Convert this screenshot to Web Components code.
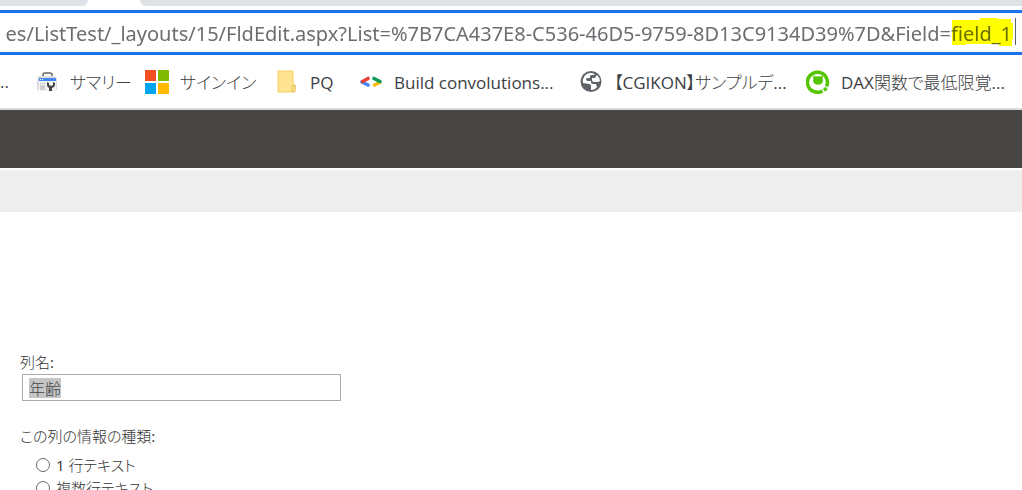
<!DOCTYPE html>
<html lang="ja">
<head>
<meta charset="utf-8">
<title>列の編集</title>
<style>
html,body{margin:0;height:100%;overflow:hidden;background:#fff}
body{font-family:"Open Sans","Noto Sans CJK JP Light","Noto Sans CJK JP",sans-serif;color:#333}
</style>
</head>
<body>
<edit-window></edit-window>

<template id="t-window">
<style>
:host{display:flex;flex-direction:column;height:100%;overflow:hidden}
.suite{flex:none;height:58px;background:#484644}
.ribbon{flex:none;height:42px;margin-top:2px;background:#eee}
main{flex:none;padding:139px 20px 0}
</style>
<tab-strip></tab-strip>
<address-bar value="es/ListTest/_layouts/15/FldEdit.aspx?List=%7B7CA437E8-C536-46D5-9759-8D13C9134D39%7D&amp;Field=field_1"></address-bar>
<bookmark-bar>
<bookmark-item icon="tools">サマリー</bookmark-item>
<bookmark-item icon="windows">サインイン</bookmark-item>
<bookmark-item icon="folder">PQ</bookmark-item>
<bookmark-item icon="code">Build convolutions...</bookmark-item>
<bookmark-item icon="globe">【CGIKON】サンプルデ...</bookmark-item>
<bookmark-item icon="qiita">DAX関数で最低限覚...</bookmark-item>
</bookmark-bar>
<div class="suite"></div>
<div class="ribbon"></div>
<main><column-form></column-form></main>
</template>

<template id="t-tabs">
<style>
:host{display:flex;flex:none;height:6px;gap:52px;background:#fff}
i{background:#dee1e6;width:88px;border-bottom-right-radius:6px}
i+i{width:auto;flex:1;border-radius:0 0 0 6px}
</style>
<i></i><i></i>
</template>

<template id="t-address">
<style>
:host{display:block;flex:none;position:relative;margin-top:4px;border:solid #1a73e8;border-width:3px 0;height:39px;background:#fff;isolation:isolate}
input{display:block;box-sizing:border-box;width:100%;height:39px;border:0;padding:2px 10px 0 0;outline:0;background:none;font:20px/37px "Noto Sans",sans-serif;color:#6b6e71;text-align:right}
svg{position:absolute;right:8px;top:4px;mix-blend-mode:multiply;pointer-events:none}
.caret{position:absolute;right:6px;top:5px;width:1px;height:27px;background:#5f6368}
</style>
<input type="text" aria-label="アドレス" spellcheck="false">
<svg width="62" height="30" viewBox="0 0 62 30"><path d="M0 3H28V1H46V2H59V6H61V22H60V29H47V27H14V28H0Z" fill="#ff0"/></svg>
<span class="caret"></span>
</template>

<template id="t-bookmarks">
<style>
:host{display:grid;flex:none;grid-template-columns:110px 130px 84px 220px 227px 1fr;align-items:center;position:relative;height:53px;padding-left:36px;border-bottom:2px solid #d9d9d9;color:#3c4043}
.more{position:absolute;left:0;top:0;font:17px/53px "Open Sans",sans-serif}
</style>
<span class="more">..</span><slot></slot>
</template>

<template id="t-bookmark">
<style>
:host{display:block;min-width:0}
a{display:flex;align-items:center;gap:11px;color:inherit;text-decoration:none;white-space:nowrap;font:17px/24px "Open Sans","Noto Sans CJK JP Light","Noto Sans CJK JP",sans-serif;font-feature-settings:"palt"}
svg{flex:none;width:24px;height:24px;margin-left:-1px}
span{padding-top:2px}
</style>
<a href="#"><svg viewBox="0 0 24 24" aria-hidden="true"></svg><span><slot></slot></span></a>
</template>

<template id="t-form">
<style>
:host{display:block;font:15px/22px "Open Sans","Noto Sans CJK JP Light","Noto Sans CJK JP",sans-serif;font-feature-settings:"palt"}
form{margin:0}
.name{display:block}
input[type=text]{display:block;box-sizing:border-box;width:319px;max-width:100%;height:27px;margin:1px 0 24px 2px;padding:0 6px;border:1px solid #ababab;outline:0;color:#444;font:16px/25px "Open Sans","Noto Sans CJK JP Light","Noto Sans CJK JP",sans-serif;background:linear-gradient(#c6c6c6,#c6c6c6) 6px 3px/32px 20px no-repeat #fff}
fieldset{border:0;margin:0;padding:0;min-width:0}
legend{padding:0;margin-bottom:6px}
.option{display:flex;align-items:center;gap:6px;height:23px;padding-left:16px}
.option input{appearance:none;box-sizing:border-box;flex:none;width:14px;height:14px;margin:0;border:1px solid #6b6b6b;border-radius:50%;background:#fff}
</style>
<form>
<label class="name" for="n">列名:</label>
<input id="n" type="text" value="年齢">
<fieldset><legend>この列の情報の種類:</legend>
<label class="option"><input type="radio" name="kind"><span>1 行テキスト</span></label>
<label class="option"><input type="radio" name="kind"><span>複数行テキスト</span></label>
</fieldset>
</form>
</template>

<script>
const ICONS={
tools:'<path d="M8 7V5q0-2 2-2h5q2 0 2 2v2" fill="none" stroke="#666" stroke-width="1.5"/><path d="M2 20V9q0-3 3-3h14q3 0 3 3v11z" fill="#ddd"/><path d="M4 10h17v11H4z" fill="#f4f4f4"/><path d="M4 8h17v3H4z" fill="#4285f4"/><path d="M5 9h1v1H5zM7 9h1v1H7z" fill="#fff"/><path d="M5 13h6v1H5zM5 15h5v5H5z" fill="#cfcfcf"/><path d="M12 12v3q0 2 2 3v3h3v-3q3-1 3-3v-2l-2-1v3l-2 1-2-1v-2z" fill="#444"/>',
windows:'<path d="M0 0h11v11H0z" fill="#f25022"/><path d="M13 0h11v11H13z" fill="#7fba00"/><path d="M0 13h11v11H0z" fill="#00a4ef"/><path d="M13 13h11v11H13z" fill="#ffb900"/>',
folder:'<path d="M3 1h15v14h2v5q0 2-2 2H3z" fill="#ffe391" stroke="#f4cf62"/><path d="M17 21v-4q0-2 2-2t1 2v3q0 2-1 2t-2-1" fill="#ffe391" stroke="#dfb94b"/>',
code:'<g fill="none" stroke-width="3.6" stroke-linecap="round"><path d="M3 12l6 3" stroke="#4285f4"/><path d="M3.500 11.500L9 8.500" stroke="#ea4335"/><path d="M20.500 12.500l-5 2.500" stroke="#fbbc04"/><path d="M15 8.500l6 3" stroke="#0f9d58"/></g>',
globe:'<circle cx="12" cy="11.500" r="10.500" fill="#5f6368"/><path d="M12 3q-5 0-7 4-2 3-1 6l6 1q2 0 2 2v4q4 0 6-3l-1-3h-3q-2 0-2-2v-1H9q-2 0-2-2 0-1 2-1h2V6q0-1 2-1h3q-1-2-4-2zM17 6q0 2-2 2h-2v2q0 2 2 2h3q2 0 3-1 0-3-3-6z" fill="#fff"/>',
qiita:'<path d="M20.500 16.500A10 10 0 1 0 16.500 20.900" fill="none" stroke="#55c500" stroke-width="3.500"/><path d="M18 18l2.500 2.500" stroke="#55c500" stroke-width="3.500"/><ellipse cx="12" cy="10.500" rx="5" ry="4.300" fill="#55c500"/><path d="M7.300 9V5.500L10.500 7zM16.700 9V5.500L13.500 7z" fill="#55c500"/>'
};
class Base extends HTMLElement{
  constructor(id){
    super();
    this.attachShadow({mode:'open'}).append(document.getElementById(id).content.cloneNode(true));
  }
}
customElements.define('tab-strip',class extends Base{constructor(){super('t-tabs')}});
customElements.define('address-bar',class extends Base{
  constructor(){super('t-address')}
  connectedCallback(){this.shadowRoot.querySelector('input').value=this.getAttribute('value')}
});
customElements.define('bookmark-item',class extends Base{
  constructor(){super('t-bookmark')}
  connectedCallback(){this.shadowRoot.querySelector('svg').innerHTML=ICONS[this.getAttribute('icon')]}
});
customElements.define('bookmark-bar',class extends Base{constructor(){super('t-bookmarks')}});
customElements.define('column-form',class extends Base{constructor(){super('t-form')}});
customElements.define('edit-window',class extends Base{constructor(){super('t-window')}});
</script>
</body>
</html>
